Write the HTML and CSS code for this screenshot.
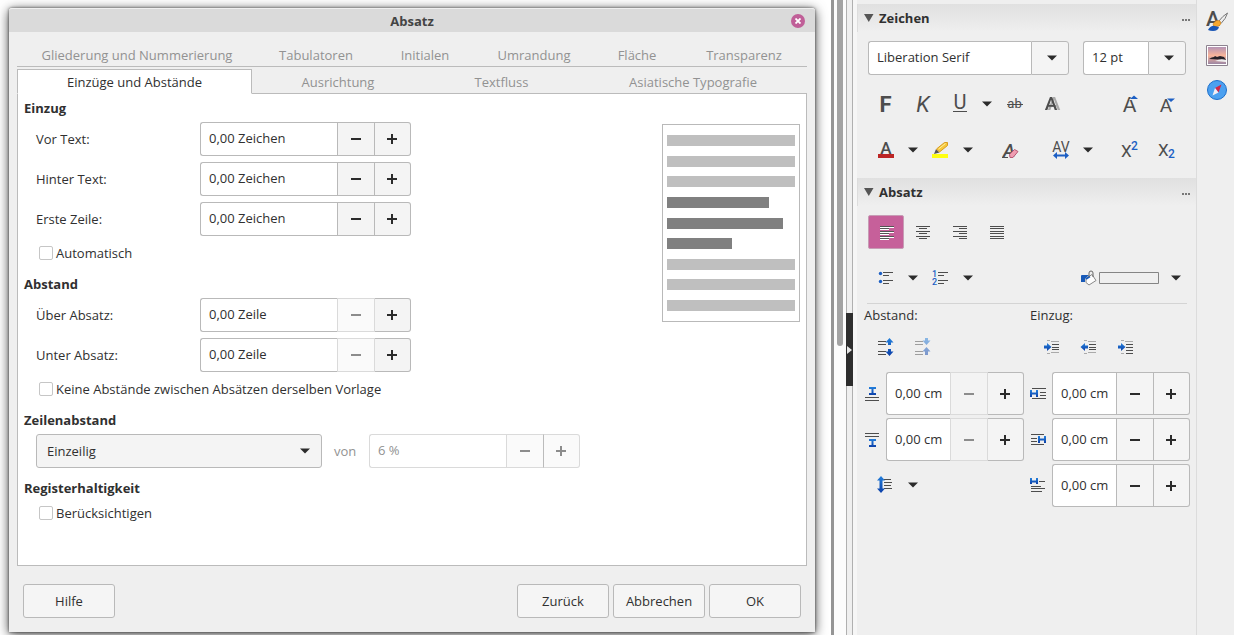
FILE: index.html
```html
<!DOCTYPE html>
<html lang="de">
<head>
<meta charset="utf-8">
<title>Absatz</title>
<link rel="stylesheet" href="styles.css">
</head>
<body>
<svg class="defs" aria-hidden="true">
  <symbol id="minus" viewBox="0 0 10 10"><path d="M0 4h10v2H0z"/></symbol>
  <symbol id="plus" viewBox="0 0 10 10"><path d="M0 4h4V0h2v4h4v2H6v4H4V6H0z"/></symbol>
  <symbol id="caret" viewBox="0 0 10 6"><path d="M0 .5h10L5 5.5z"/></symbol>
  <symbol id="dots" viewBox="0 0 8 2"><path d="M0 0h2v2H0zM3 0h2v2H3zM6 0h2v2H6z"/></symbol>
  <linearGradient id="blue" x1="0" y1="0" x2="0" y2="1"><stop offset="0" stop-color="#2480dc"/><stop offset="1" stop-color="#0b3fa8"/></linearGradient>
  <linearGradient id="sky" x1="0" y1="0" x2="0" y2="1"><stop offset="0" stop-color="#b493b4"/><stop offset=".5" stop-color="#f8b49a"/><stop offset="1" stop-color="#9c86a4"/></linearGradient>
</svg>

<main class="document">
  <section class="dialog" role="dialog" aria-labelledby="dialog-title">
    <header class="titlebar">
      <h1 id="dialog-title">Absatz</h1>
      <button class="close" aria-label="Schließen"><svg width="6" height="6" viewBox="0 0 6 6"><path d="M.5.5l5 5M5.5.5l-5 5" stroke="#fff" stroke-width="1.800"/></svg></button>
    </header>
    <nav class="tabs">
      <div class="tab-row tab-row-back">
        <button class="tab">Gliederung und Nummerierung</button>
        <button class="tab">Tabulatoren</button>
        <button class="tab">Initialen</button>
        <button class="tab">Umrandung</button>
        <button class="tab">Fläche</button>
        <button class="tab">Transparenz</button>
      </div>
      <div class="tab-row tab-row-front">
        <button class="tab active">Einzüge und Abstände</button>
        <button class="tab">Ausrichtung</button>
        <button class="tab">Textfluss</button>
        <button class="tab">Asiatische Typografie</button>
      </div>
    </nav>
    <div class="panel">
      <form class="form">
        <section class="group">
          <h2>Einzug</h2>
          <div class="rows">
            <div class="field"><label for="before">Vor Text:</label>
              <div class="spin"><input id="before" value="0,00 Zeichen"><button type="button" aria-label="Weniger"><svg><use href="#minus"/></svg></button><button type="button" aria-label="Mehr"><svg><use href="#plus"/></svg></button></div></div>
            <div class="field"><label for="after">Hinter Text:</label>
              <div class="spin"><input id="after" value="0,00 Zeichen"><button type="button" aria-label="Weniger"><svg><use href="#minus"/></svg></button><button type="button" aria-label="Mehr"><svg><use href="#plus"/></svg></button></div></div>
            <div class="field"><label for="first">Erste Zeile:</label>
              <div class="spin"><input id="first" value="0,00 Zeichen"><button type="button" aria-label="Weniger"><svg><use href="#minus"/></svg></button><button type="button" aria-label="Mehr"><svg><use href="#plus"/></svg></button></div></div>
          </div>
          <label class="check"><input type="checkbox">Automatisch</label>
        </section>
        <section class="group">
          <h2>Abstand</h2>
          <div class="rows">
            <div class="field"><label for="above">Über Absatz:</label>
              <div class="spin"><input id="above" value="0,00 Zeile"><button type="button" disabled aria-label="Weniger"><svg><use href="#minus"/></svg></button><button type="button" aria-label="Mehr"><svg><use href="#plus"/></svg></button></div></div>
            <div class="field"><label for="below">Unter Absatz:</label>
              <div class="spin"><input id="below" value="0,00 Zeile"><button type="button" disabled aria-label="Weniger"><svg><use href="#minus"/></svg></button><button type="button" aria-label="Mehr"><svg><use href="#plus"/></svg></button></div></div>
          </div>
          <label class="check"><input type="checkbox">Keine Abstände zwischen Absätzen derselben Vorlage</label>
        </section>
        <section class="group">
          <h2>Zeilenabstand</h2>
          <div class="line-spacing">
            <div class="select"><select aria-label="Zeilenabstand"><option>Einzeilig</option><option>Doppelt</option></select><svg class="caret"><use href="#caret"/></svg></div>
            <label class="muted" for="amount">von</label>
            <div class="spin off"><input id="amount" value="6 %" disabled><button type="button" disabled aria-label="Weniger"><svg><use href="#minus"/></svg></button><button type="button" disabled aria-label="Mehr"><svg><use href="#plus"/></svg></button></div>
          </div>
        </section>
        <section class="group compact">
          <h2>Registerhaltigkeit</h2>
          <label class="check"><input type="checkbox">Berücksichtigen</label>
        </section>
      </form>
      <div class="preview">
        <i></i><i></i><i></i><i class="own w80"></i><i class="own w90"></i><i class="own w50"></i><i></i><i></i><i></i>
      </div>
    </div>
    <footer class="actions">
      <button class="push help">Hilfe</button>
      <button class="push">Zurück</button>
      <button class="push">Abbrechen</button>
      <button class="push">OK</button>
    </footer>
  </section>
</main>

<div class="scrollbar"><div class="thumb"></div></div>
<div class="splitter"><button class="grip" aria-label="Seitenleiste ausblenden"><svg width="5" height="8" viewBox="0 0 5 8"><path d="M0 0l5 4-5 4z" fill="#e8e8e8"/></svg></button></div>

<aside class="sidebar">
  <header class="deck-head"><svg width="10" height="8" viewBox="0 0 10 8"><path d="M0 0h9.500L4.750 8z" fill="#555"/></svg><h2>Zeichen</h2><button class="more" aria-label="Mehr Optionen"><svg><use href="#dots"/></svg></button></header>
  <div class="combos">
    <div class="combo font"><input aria-label="Schriftname" value="Liberation Serif"><button aria-label="Schriftliste"><svg class="caret"><use href="#caret"/></svg></button></div>
    <div class="combo size"><input aria-label="Schriftgröße" value="12 pt"><button aria-label="Größenliste"><svg class="caret"><use href="#caret"/></svg></button></div>
  </div>
  <div class="tools">
    <button class="tool" aria-label="Fett"><svg class="icon" viewBox="0 0 23 24"><text x="11.500" y="20" font-size="22" font-weight="700" text-anchor="middle">F</text></svg></button>
    <button class="tool" aria-label="Kursiv"><svg class="icon" viewBox="0 0 23 24"><text x="12" y="20" font-size="22" font-style="italic" text-anchor="middle">K</text></svg></button>
    <button class="tool" aria-label="Unterstrichen"><svg class="icon" viewBox="0 0 23 24"><text x="12" y="17" font-size="20" text-anchor="middle">U</text><path d="M5 19h14v1H5z"/></svg></button>
    <button class="drop" aria-label="Unterstreichungsart"><svg class="caret"><use href="#caret"/></svg></button>
    <button class="tool" aria-label="Durchgestrichen"><svg class="icon" viewBox="0 0 23 24"><text x="11.500" y="16" font-size="13" text-anchor="middle">ab</text><path d="M4 12h16v1H4z"/></svg></button>
    <button class="tool" aria-label="Schatten"><svg class="icon shadow" viewBox="0 0 23 24"><text x="11" y="18" font-size="19" font-weight="500" text-anchor="middle">A</text></svg></button>
    <span class="space"></span>
    <button class="tool" aria-label="Schrift vergrößern"><svg class="icon" viewBox="0 0 23 24"><text x="11.500" y="20" font-size="21" text-anchor="middle">A</text><path d="M11 8l5-5 5 5z" fill="#efefef"/><path d="M12 7l4-3.500L20 7z" fill="#1c5fc4"/></svg></button>
    <button class="tool" aria-label="Schrift verkleinern"><svg class="icon" viewBox="0 0 23 24"><text x="11" y="20" font-size="19" text-anchor="middle">A</text><path d="M11 5.500h10L16 11z" fill="#efefef"/><path d="M12 6.500h8l-4 3.500z" fill="#1c5fc4"/></svg></button>
  </div>
  <div class="tools">
    <button class="tool" aria-label="Schriftfarbe"><svg class="icon" viewBox="0 0 23 24"><text x="12" y="16" font-size="17" font-weight="500" text-anchor="middle">A</text><path d="M4 16h16v4H4z" fill="#bc2525"/></svg></button>
    <button class="drop" aria-label="Farbauswahl"><svg class="caret"><use href="#caret"/></svg></button>
    <button class="tool" aria-label="Hervorheben"><svg class="icon" viewBox="0 0 23 24"><path d="M3 16h16v4H3z" fill="#ffff12"/><path d="M5 16l2-5 3.500 3.500z" fill="#555"/><path d="M7.500 11l8-6.500h3V7.500l-8 6.500z" fill="#f7c83b" stroke="#d89c20"/><path d="M9.500 11l7-5.500" stroke="#fff0a0"/></svg></button>
    <button class="drop" aria-label="Hervorhebungsfarbe"><svg class="caret"><use href="#caret"/></svg></button>
    <span class="space"></span>
    <button class="tool" aria-label="Formatierung löschen"><svg class="icon" viewBox="0 0 23 24"><text x="11" y="19" font-size="19" font-style="italic" font-weight="500" text-anchor="middle">A</text><path d="M4 19h6v1H4z"/><path d="M11.500 16.500l5-5 3.500 2-5 6h-3z" fill="#ef9db1" stroke="#b95873"/></svg></button>
    <span class="space"></span>
    <button class="tool" aria-label="Zeichenabstand"><svg class="icon" viewBox="0 0 23 24"><text x="12" y="14" font-size="14" text-anchor="middle">AV</text><path d="M4 17.500L8 14v2.500h8V14l4 3.500-4 3.500v-2.500H8V21z" fill="#1c5fc4"/></svg></button>
    <button class="drop" aria-label="Abstandsliste"><svg class="caret"><use href="#caret"/></svg></button>
    <span class="space"></span>
    <button class="tool" aria-label="Hochgestellt"><svg class="icon" viewBox="0 0 23 24"><text x="3" y="19" font-size="17">X</text><text x="13" y="12" font-size="12" font-weight="500" class="num">2</text></svg></button>
    <button class="tool" aria-label="Tiefgestellt"><svg class="icon" viewBox="0 0 23 24"><text x="3" y="18" font-size="17">X</text><text x="13" y="20" font-size="12" font-weight="500" class="num">2</text></svg></button>
  </div>

  <header class="deck-head second"><svg width="10" height="8" viewBox="0 0 10 8"><path d="M0 0h9.500L4.750 8z" fill="#555"/></svg><h2>Absatz</h2><button class="more" aria-label="Mehr Optionen"><svg><use href="#dots"/></svg></button></header>
  <div class="tools align">
    <button class="tool pressed" aria-label="Linksbündig"><svg class="icon" viewBox="0 0 23 24"><path d="M5 7.500h14M5 9.500h9M5 12.500h14M5 14.500h9M5 17.500h14M5 19.500h9" stroke="#fff"/><path d="M5 6.500h14M5 8.500h9M5 11.500h14M5 13.500h9M5 16.500h14M5 18.500h9" stroke="#555"/></svg></button>
    <button class="tool" aria-label="Zentriert"><svg class="icon lines" viewBox="0 0 23 24"><path d="M5 6.500h14M8 8.500h8M5 11.500h14M8 13.500h8M5 16.500h14M8 18.500h8"/></svg></button>
    <button class="tool" aria-label="Rechtsbündig"><svg class="icon lines" viewBox="0 0 23 24"><path d="M5 6.500h14M11 8.500h8M5 11.500h14M11 13.500h8M5 16.500h14M11 18.500h8"/></svg></button>
    <button class="tool" aria-label="Blocksatz"><svg class="icon lines" viewBox="0 0 23 24"><path d="M5 6.500h14M5 8.500h14M5 11.500h14M5 13.500h14M5 16.500h14M5 18.500h14"/></svg></button>
  </div>
  <div class="tools">
    <button class="tool" aria-label="Aufzählung"><svg class="icon lines" viewBox="0 0 23 24"><path d="M9 6.500h10M9 9.500h6M9 14.500h10M9 17.500h6"/><circle class="dot" cx="6.500" cy="7.500" r="1.700"/><circle class="dot" cx="6.500" cy="15.500" r="1.700"/></svg></button>
    <button class="drop" aria-label="Aufzählungsliste"><svg class="caret"><use href="#caret"/></svg></button>
    <button class="tool" aria-label="Nummerierung"><svg class="icon lines" viewBox="0 0 23 24"><path d="M9 6.500h10M9 9.500h6M9 14.500h10M9 17.500h6"/><text x="3" y="11" font-size="9" font-weight="500" class="num">1</text><text x="3" y="19" font-size="9" font-weight="500" class="num">2</text></svg></button>
    <button class="drop" aria-label="Nummerierungsliste"><svg class="caret"><use href="#caret"/></svg></button>
    <span class="space"></span>
    <button class="fill" aria-label="Hintergrundfarbe"><svg width="80" height="16" viewBox="0 0 80 16"><path d="M2 5q0-1 1-1h7L6 8v3H2z" fill="#1759b8" transform="translate(0 1)"/><path d="M7 8.500l6-4 4 6-7 4.500-3-2.500z" fill="#fdfdfd" stroke="#888"/><path d="M7 9l4-2.500" stroke="#1759b8" stroke-width="1.500"/><path d="M10 7V3q0-2 2-2t2 2v4" fill="none" stroke="#666"/><path d="M20.500 2.500h59v11h-59z" fill="none" stroke="#858585"/></svg></button>
    <button class="drop" aria-label="Farbliste"><svg class="caret"><use href="#caret"/></svg></button>
  </div>
  <hr>
  <div class="columns">
    <section class="column">
      <h3>Abstand:</h3>
      <div class="small-tools">
        <button class="tool" aria-label="Abstand vergrößern"><svg class="icon lines" viewBox="0 0 23 24"><path d="M4 6.500h8M4 9.500h8M4 16.500h8M4 19.500h8"/><path class="blue" d="M11.500 7.500l4-4.500 4 4.500H17V10h-3V7.500zM14 14h3v2.500h2.500l-4 4.500-4-4.500H14z"/></svg></button>
        <button class="tool" disabled aria-label="Abstand verkleinern"><svg class="icon lines" viewBox="0 0 23 24"><path d="M4 6.500h8M4 9.500h8M4 16.500h8M4 19.500h8"/><path class="blue" d="M14 3h3v2.500h2.500l-4 4.500-4-4.500H14zM11.500 16.500l4-4.500 4 4.500H17V20h-3v-3.500z"/></svg></button>
      </div>
      <div class="measures">
        <label for="top" aria-label="Über Absatz"><svg class="mini lines" viewBox="0 0 16 16"><path d="M1 11.500h14M1 14.500h14"/><path class="blue" d="M5 1h7v2H9.500v4H12v2H5V7h2.500V3H5z"/></svg></label>
        <div class="spin tall"><input id="top" value="0,00 cm"><button disabled aria-label="Weniger"><svg><use href="#minus"/></svg></button><button aria-label="Mehr"><svg><use href="#plus"/></svg></button></div>
        <label for="bottom" aria-label="Unter Absatz"><svg class="mini lines" viewBox="0 0 16 16"><path d="M1 1.500h14M1 4.500h14"/><path class="blue" d="M5 7h7v2H9.500v4H12v2H5v-2h2.500V9H5z"/></svg></label>
        <div class="spin tall"><input id="bottom" value="0,00 cm"><button disabled aria-label="Weniger"><svg><use href="#minus"/></svg></button><button aria-label="Mehr"><svg><use href="#plus"/></svg></button></div>
      </div>
      <div class="small-tools spacing">
        <button class="tool" aria-label="Zeilenabstand"><svg class="icon lines" viewBox="0 0 23 24"><path d="M10 6.500h7M10 9.500h8M10 12.500h7M10 15.500h8"/><path class="blue" d="M3 7.500l4-4.500 4 4.500H8.500v8H11L7 20l-4-4.500h2.500v-8z"/></svg></button>
        <button class="drop" aria-label="Zeilenabstandsliste"><svg class="caret"><use href="#caret"/></svg></button>
      </div>
    </section>
    <section class="column">
      <h3>Einzug:</h3>
      <div class="small-tools">
        <button class="tool" aria-label="Einzug vergrößern"><svg class="icon lines" viewBox="0 0 23 24"><path class="pale" d="M7 5.500h3M11 6.500h8M7 18.500h3M11 17.500h8"/><path d="M12 9.500h7M12 12.500h7M12 14.500h7"/><path class="blue" d="M4 10.500h3V8l4.500 4L7 16v-2.500H4z"/></svg></button>
        <button class="tool" aria-label="Einzug verkleinern"><svg class="icon lines" viewBox="0 0 23 24"><path class="pale" d="M7 5.500h3M11 6.500h8M7 18.500h3M11 17.500h8"/><path d="M12 9.500h7M12 12.500h7M12 14.500h7"/><path class="blue" d="M11 10.500H8V8l-4.500 4L8 16v-2.500h3z"/></svg></button>
        <button class="tool" aria-label="Hängender Einzug"><svg class="icon lines" viewBox="0 0 23 24"><path class="pale" d="M7 5.500h3M11 6.500h8M7 18.500h3"/><path d="M12 9.500h7M12 12.500h7M12 15.500h7M12 18.500h7"/><path class="blue" d="M4 10.500h3V8l4.500 4L7 16v-2.500H4z"/></svg></button>
      </div>
      <div class="measures">
        <label for="left" aria-label="Vor Text"><svg class="mini lines" viewBox="0 0 16 16"><path d="M2 2.500h14M10 6.500h6M10 9.500h6M2 12.500h14"/><path class="blue" d="M0 4h2v2.500h4V4h2v7H6V8.500H2V11H0z"/></svg></label>
        <div class="spin tall"><input id="left" value="0,00 cm"><button aria-label="Weniger"><svg><use href="#minus"/></svg></button><button aria-label="Mehr"><svg><use href="#plus"/></svg></button></div>
        <label for="right" aria-label="Hinter Text"><svg class="mini lines" viewBox="0 0 16 16"><path d="M1 2.500h13M1 6.500h6M1 9.500h6M1 12.500h13"/><path class="blue" d="M8 4h2v2.500h4V4h2v7h-2V8.500h-4V11H8z"/></svg></label>
        <div class="spin tall"><input id="right" value="0,00 cm"><button aria-label="Weniger"><svg><use href="#minus"/></svg></button><button aria-label="Mehr"><svg><use href="#plus"/></svg></button></div>
        <label for="firstline" aria-label="Erste Zeile"><svg class="mini lines" viewBox="0 0 16 16"><path d="M9 3.500h6M1 8.500h10M1 10.500h14M1 13.500h11"/><path class="blue" d="M0 0h2v2.500h4V0h2v6H6V4.500H2V6H0z"/></svg></label>
        <div class="spin tall"><input id="firstline" value="0,00 cm"><button aria-label="Weniger"><svg><use href="#minus"/></svg></button><button aria-label="Mehr"><svg><use href="#plus"/></svg></button></div>
      </div>
    </section>
  </div>
</aside>

<nav class="deck-tabs">
  <button aria-label="Formatvorlagen"><svg width="22" height="24" viewBox="0 0 22 24"><text x="0" y="18" font-size="21" font-weight="500">A</text><path d="M21.500 5q-5 3-9 8.500l2.500 2q5-5 6.500-10.500z" fill="#eee" stroke="#777"/><path d="M7 16q3-5 7-3 2 3-1 5l-5 1z" fill="#f5a72f" stroke="#d17e12" stroke-width=".6"/><path d="M2 22q3-5 7-4l4 1q-1 4-6 4-3 0-5-1z" fill="#1a56b5"/></svg></button>
  <button aria-label="Galerie"><svg width="22" height="22" viewBox="0 0 22 22"><path d="M.5.5h21v20H.5z" fill="#fff" stroke="#8c828f"/><path d="M2 2h18v17H2z" fill="url(#sky)"/><path d="M3 14q3-2 5-2l1-1 2 1 3-1 4 1 2 3z" fill="#262128"/><path d="M9 16q6-3 11-1v2z" fill="#eee"/></svg></button>
  <button aria-label="Navigator"><svg width="22" height="22" viewBox="0 0 22 22"><circle cx="11" cy="10" r="9.500" fill="#4ba0f0" stroke="#1d6fcb"/><path d="M15.500 4.500l-3 8L9 8z" fill="#d32546"/><path d="M6.500 15.500L9 8l3.500 4.500z" fill="#f1eef4"/></svg></button>
</nav>
</body>
</html>
```
FILE: styles.css
```css
* { box-sizing: border-box; }

body {
  margin: 0;
  min-height: 100vh;
  display: flex;
  background: #fff;
  color: #303030;
  font: 13px/18px "Open Sans", "Noto Sans", sans-serif;
}

.defs { position: absolute; width: 0; height: 0; }

button, input, select { font: inherit; color: inherit; margin: 0; }
button { padding: 0; border: 0; background: none; }
h1, h2, h3 { margin: 0; font-size: 13px; line-height: 18px; }
h1, h2 { font-weight: 700; }
h3 { font-weight: 400; }
svg { display: block; flex: none; }
svg text { font-family: Roboto, "Liberation Sans", sans-serif; }

/* Dialog */
.document {
  flex: 1;
  min-width: 0;
  display: flex;
  padding: 8px 16px 3px 9px;
  overflow: hidden;
}

.dialog {
  flex: 1;
  display: flex;
  flex-direction: column;
  background: #efefef;
  border-radius: 3px 3px 0 0;
  box-shadow: 0 0 3px rgba(0, 0, 0, .6), 0 2px 12px rgba(0, 0, 0, .75);
}

.titlebar {
  display: grid;
  grid-template-columns: 1fr auto 1fr;
  align-items: center;
  height: 24px;
  padding: 0 10px;
  background: #dadada;
  border-top: 1px solid #efefef;
  border-radius: 3px 3px 0 0;
}
.titlebar h1 { grid-column: 2; color: #444; }

.close {
  justify-self: end;
  display: grid;
  place-items: center;
  width: 14px;
  height: 14px;
  border-radius: 7px;
  background: #c05f98;
}

.tabs { margin: 12px 8px 0; }
.tab-row { display: grid; }
.tab-row-back {
  grid-template-columns: 240fr 118fr 100fr 118fr 88fr 126fr;
  height: 23px;
  border-bottom: 1px solid #bbb;
}
.tab-row-front {
  grid-template-columns: 235fr 172fr 155fr 228fr;
  height: 27px;
  padding-top: 2px;
}
.tab { color: #929292; white-space: nowrap; }
.tab-row-front .tab { padding-top: 2px; border-bottom: 1px solid #bbb; }
.tab-row-front .tab.active {
  padding: 0;
  color: #303030;
  background: #fff;
  border: 1px solid #bbb;
  border-bottom-color: #fff;
}

.panel {
  flex: 1;
  display: flex;
  justify-content: space-between;
  align-items: flex-start;
  margin: 0 8px;
  padding: 5px 6px 0;
  background: #fff;
  border: 1px solid #bbb;
  border-top: 0;
}

.group + .group { margin-top: 13px; }
.group + .compact { margin-top: 11px; }
.group h2 { margin-bottom: 5px; }
.rows { display: grid; gap: 6px; }
.field {
  display: grid;
  grid-template-columns: 164px 211px;
  align-items: center;
  margin-left: 12px;
}

.spin {
  display: grid;
  grid-template-columns: 1fr 38px 36px;
  width: 211px;
  height: 34px;
}
.spin input, .combo input {
  min-width: 0;
  padding: 0 8px 2px;
  background: #fff;
  border: 1px solid #b9b9b9;
  border-right: 0;
  border-radius: 3px 0 0 3px;
  outline: 0;
}
.spin button, .combo button {
  display: grid;
  place-items: center;
  background: #f4f4f4;
  border: 1px solid #b9b9b9;
  fill: #2b2b2b;
}
.spin button:last-child { padding-right: 1px; border-left: 0; border-radius: 0 3px 3px 0; }
.spin button:nth-child(2):disabled { border-color: #dadada; }
.spin button:disabled { background: #fafafa; fill: #8c8c8c; }
.spin svg { width: 10px; height: 10px; }

.spin.off input, .spin.off button { border-color: #dadada; }
.spin.off input { color: #929292; }
.spin.off button:nth-child(2) { border-right-color: #bbb; }

.check {
  display: flex;
  align-items: center;
  gap: 3px;
  width: max-content;
  margin: 8px 0 0 15px;
}
.compact .check { margin-top: 7px; }
.check input {
  appearance: none;
  width: 14px;
  height: 14px;
  background: #fff;
  border: 1px solid #c6c6c6;
  border-radius: 2px;
}

.line-spacing { display: flex; align-items: center; margin-left: 12px; }
.line-spacing .muted { width: 23px; margin: 0 12px; color: #929292; }
.select { display: grid; align-items: center; width: 286px; }
.select select {
  grid-area: 1 / 1;
  appearance: none;
  height: 34px;
  padding: 0 10px;
  background: #f4f4f4;
  border: 1px solid #b9b9b9;
  border-radius: 3px;
}
.select .caret { grid-area: 1 / 1; justify-self: end; margin-right: 12px; pointer-events: none; }
.caret { width: 10px; height: 6px; fill: #2b2b2b; }

.preview {
  display: flex;
  flex-direction: column;
  justify-content: space-between;
  width: 138px;
  height: 198px;
  margin-top: 25px;
  padding: 10px 4px;
  border: 1px solid #b9b9b9;
}
.preview i { height: 11px; background: #bfbfbf; }
.preview .own { background: #808080; }
.preview .w80 { width: 80%; }
.preview .w90 { width: 91%; }
.preview .w50 { width: 51%; }

.actions { display: flex; gap: 4px; padding: 18px 14px 14px; }
.push {
  width: 92px;
  height: 34px;
  background: #f5f5f5;
  border: 1px solid #b9b9b9;
  border-radius: 3px;
}
.push.help { margin-right: auto; }

/* Scroll bar and splitter */
.scrollbar { width: 15px; padding-left: 3px; border-left: 3px solid #959595; background: #fcfcfc; }
.thumb { width: 6px; height: 346px; background: #a3a3a3; border-radius: 0 0 3px 3px; }
.splitter {
  display: flex;
  align-items: flex-start;
  width: 7px;
  background: #efefef;
  border: solid #b0b0b0;
  border-width: 0 1px;
}
.grip {
  flex: none;
  display: grid;
  place-items: center;
  width: 7px;
  height: 73px;
  margin: 313px -1px 0;
  background: #2e2e2e;
}

/* Sidebar */
.sidebar {
  width: 343px;
  padding-top: 4px;
  background: #efefef;
  border-left: 4px solid #f6f6f6;
}
.deck-head {
  display: flex;
  align-items: center;
  gap: 5px;
  height: 28px;
  padding: 0 6px;
  border-left: 1px solid #ddd;
  background: linear-gradient(#e0e0e0, #efefef);
}
.deck-head.second { margin-top: 11px; }
.more { margin: 4px 0 0 auto; }
.more svg { width: 8px; height: 2px; fill: #777; }

.combos { display: flex; justify-content: space-between; margin: 9px 10px 0 11px; }
.combo { display: grid; grid-template-columns: 1fr 38px; height: 34px; }
.combo button { padding-left: 4px; border-radius: 0 3px 3px 0; }
.combo.font { width: 201px; }
.combo.size { width: 103px; }

.tools { display: flex; align-items: center; margin: 12px 11px 0 10px; }
.tools.align { margin-top: 9px; }
.tool { display: grid; place-items: center; width: 37px; height: 34px; }
.tool:disabled { opacity: .5; }
.tool.pressed {
  width: 36px;
  margin-left: 1px;
  background: #c6609a;
  border: 1px solid #c79cb5;
  border-radius: 2px;
}
.icon { width: 23px; height: 24px; fill: #4d4d4d; }
.icon.shadow { filter: drop-shadow(3px 0 0 #aaa); }
.mini { width: 16px; height: 16px; }
.lines path { stroke: #4d4d4d; }
.lines .pale { stroke: #aaa; }
.lines .blue { fill: url(#blue); stroke: none; }
.icon .dot, .icon .num { fill: #1c5fc4; }
.drop { display: grid; place-items: center; width: 18px; height: 34px; }
.space { flex: 1; }
.fill { width: 80px; margin-right: 8px; }

.sidebar hr { height: 1px; margin: 8px 9px 2px 10px; border: 0; background: #d4d4d4; }
.columns { display: grid; grid-template-columns: 1fr 1fr; gap: 6px; padding: 0 6px 0 7px; }
.small-tools { display: flex; margin: 6px 0 8px 3px; }
.small-tools.spacing { margin-top: 7px; }
.measures { display: grid; grid-template-columns: 16px 1fr; column-gap: 6px; row-gap: 3px; align-items: center; }
.spin.tall { width: auto; height: 43px; }
.spin.tall button:disabled { background: #f3f3f3; }

.deck-tabs {
  display: flex;
  flex-direction: column;
  align-items: center;
  gap: 13px;
  width: 38px;
  padding: 8px 0 0 3px;
  background: #efefef;
  border-left: 1px solid #dcdcdc;
  fill: #4d4d4d;
}
```
